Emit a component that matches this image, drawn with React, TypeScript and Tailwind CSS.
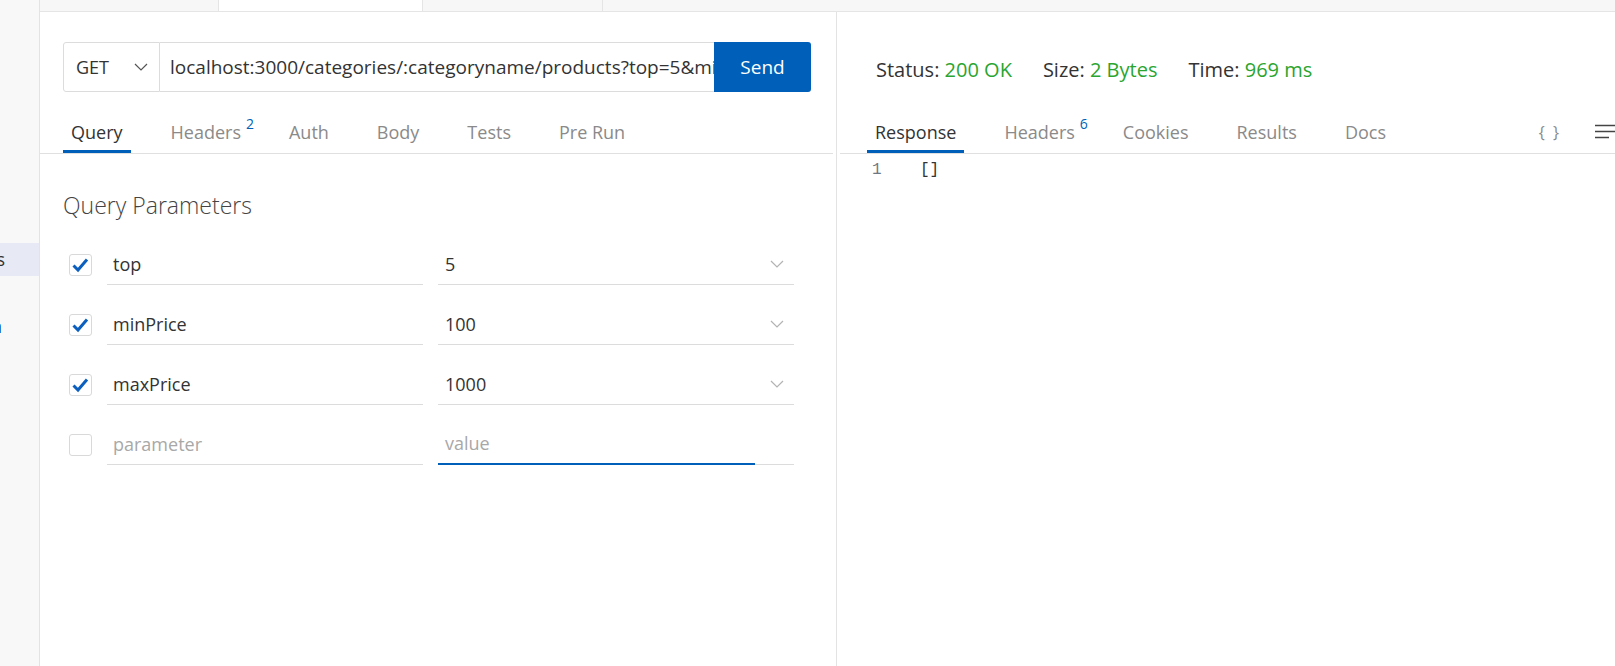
import React from "react";

type Tab = { label: string; badge?: string };

const requestTabs: Tab[] = [
  { label: "Query" },
  { label: "Headers", badge: "2" },
  { label: "Auth" },
  { label: "Body" },
  { label: "Tests" },
  { label: "Pre Run" },
];

const responseTabs: Tab[] = [
  { label: "Response" },
  { label: "Headers", badge: "6" },
  { label: "Cookies" },
  { label: "Results" },
  { label: "Docs" },
];

const params = [
  { key: "top", value: "5" },
  { key: "minPrice", value: "100" },
  { key: "maxPrice", value: "1000" },
];

function Chevron({ className }: { className?: string }) {
  return (
    <svg width="14" height="8" viewBox="0 0 14 8" fill="none" className={className}>
      <path d="M1 1L7 7L13 1" stroke="currentColor" strokeWidth="1.2" />
    </svg>
  );
}

function Check() {
  return (
    <svg width="21" height="20" viewBox="0 0 21 20" fill="none">
      <path d="M3.5 10.5L8 15L17 4.5" stroke="#0a5fbf" strokeWidth="3" strokeLinejoin="miter" />
    </svg>
  );
}

function TabRow({ tabs, active }: { tabs: Tab[]; active: number }) {
  return (
    <div className="flex gap-[32px]">
      {tabs.map((t, i) => (
        <div
          key={t.label}
          className={`flex h-[43px] items-end border-b-[3px] px-[8px] pb-[6px] ${
            i === active ? "border-[#005fb8] text-[#333]" : "border-transparent text-[#8a8a8a]"
          }`}
        >
          <span className="relative text-[18px] leading-[24px]">
            {t.label}
            {t.badge && (
              <span className="absolute left-full top-[-4px] ml-[5px] text-[14px] leading-[16px] text-[#005fb8]">
                {t.badge}
              </span>
            )}
          </span>
        </div>
      ))}
    </div>
  );
}

function ParamRow({ k, v, checked, last }: { k: string; v: string; checked: boolean; last?: boolean }) {
  return (
    <div className="flex items-center">
      <div className="flex h-[22px] w-[23px] items-center justify-center rounded-[3px] border border-[#d9d9d9]">
        {checked && <Check />}
      </div>
      <div
        className={`ml-[15px] flex h-[41px] w-[316px] items-center border-b border-[#dcdcdc] pl-[6px] text-[18px] ${
          checked ? "text-[#333]" : "text-[#a8a8a8]"
        }`}
      >
        {k}
      </div>
      <div
        className={`ml-[15px] flex h-[41px] w-[317px] items-center pl-[7px] text-[18px] ${
          last ? "border-b-2 border-[#005fb8] text-[#a8a8a8]" : "border-b border-[#dcdcdc] text-[#333]"
        }`}
      >
        {v}
      </div>
      <div className="flex h-[41px] w-[39px] items-center border-b border-[#dcdcdc] pl-[15px] text-[#b3b3b3]">
        {!last && <Chevron />}
      </div>
    </div>
  );
}

export default function App() {
  return (
    <div className="flex h-[666px] w-[1615px] overflow-hidden bg-white font-['Open_Sans',sans-serif] text-[#333]">
      {/* side bar, mostly cut off */}
      <div className="flex w-[40px] shrink-0 flex-col border-r border-[#e3e3e3] bg-[#f8f8f8]">
        <div className="mt-[243px] flex h-[33px] items-center justify-end overflow-hidden whitespace-nowrap bg-[#e7eaf4] pr-[34px] text-[18px] text-[#333]">
          Requests
        </div>
        <div className="mt-[38px] flex h-[24px] items-center justify-end overflow-hidden whitespace-nowrap pr-[37px] text-[18px] text-[#0b3d91]">
          Collection
        </div>
      </div>

      <div className="flex flex-1 flex-col">
        {/* top tab strip */}
        <div className="flex h-[12px] shrink-0 border-b border-[#e5e5e5] bg-[#f7f7f7]">
          <div className="w-[179px] border-r border-[#e5e5e5]" />
          <div className="w-[204px] border-r border-[#e5e5e5] bg-white" />
          <div className="w-[180px] border-r border-[#e5e5e5]" />
        </div>

        <div className="flex flex-1">
          {/* request panel */}
          <div className="flex w-[797px] shrink-0 flex-col border-r border-[#e3e3e3]">
            <div className="ml-[23px] mt-[30px] flex h-[50px] w-[748px]">
              <div className="flex w-[97px] items-center justify-between rounded-l-[3px] border border-[#dcdcdc] pl-[12px] pr-[11px] text-[18px]">
                GET
                <Chevron className="text-[#555]" />
              </div>
              <div className="flex flex-1 items-center overflow-hidden whitespace-nowrap border-y border-[#dcdcdc] pl-[10px] text-[19px]">
                localhost:3000/categories/:categoryname/products?top=5&minPrice=100&maxPrice=1000
              </div>
              <div className="flex w-[97px] items-center justify-center rounded-r-[3px] bg-[#005fb8] text-[19px] text-white">
                Send
              </div>
            </div>

            <div className="mr-[3px] mt-[18px] border-b border-[#e0e0e0] pl-[23px]">
              <TabRow tabs={requestTabs} active={0} />
            </div>

            <div className="mt-[36px] pl-[23px] text-[23px] font-light leading-[30px] text-[#444]">
              Query Parameters
            </div>

            <div className="mt-[24px] flex flex-col gap-[19px] pl-[29px]">
              {params.map((p) => (
                <ParamRow key={p.key} k={p.key} v={p.value} checked />
              ))}
              <ParamRow k="parameter" v="value" checked={false} last />
            </div>
          </div>

          {/* response panel */}
          <div className="flex flex-1 flex-col">
            <div className="mt-[44px] flex gap-[31px] pl-[39px] text-[20px] leading-[28px]">
              <span>
                Status: <span className="text-[#2aa52f]">200 OK</span>
              </span>
              <span>
                Size: <span className="text-[#2aa52f]">2 Bytes</span>
              </span>
              <span>
                Time: <span className="text-[#2aa52f]">969 ms</span>
              </span>
            </div>

            <div className="ml-[3px] mt-[26px] flex border-b border-[#e0e0e0] pl-[27px]">
              <TabRow tabs={responseTabs} active={0} />
              <div className="ml-auto mr-[-6px] flex items-center">
                <span className="text-[16px] tracking-[2px] text-[#888]">{"{ }"}</span>
                <svg width="26" height="16" viewBox="0 0 26 16" className="ml-[34px]">
                  <path d="M0 1.5H26M0 7.5H26M0 13.5H14" stroke="#444" strokeWidth="1.4" />
                </svg>
              </div>
            </div>

            <div className="flex h-[32px] items-center pl-[35px] font-['Liberation_Mono',monospace] text-[16px]">
              <span className="w-[48px] text-[#6e7781]">1</span>
              <span className="text-[#333]">[]</span>
            </div>
          </div>
        </div>
      </div>
    </div>
  );
}
